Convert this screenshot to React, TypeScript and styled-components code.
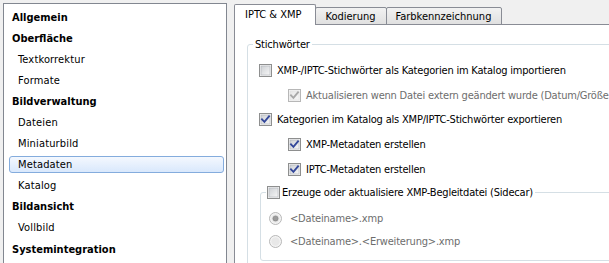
import React from 'react'
import styled, { createGlobalStyle } from 'styled-components'

const GlobalStyle = createGlobalStyle`
  html, body {
    margin: 0;
    padding: 0;
    background: #f0f0f0;
    overflow: hidden;
  }
  body {
    font-family: 'DejaVu Sans Condensed', 'Liberation Sans', Arial, sans-serif;
    font-size: 11px;
    color: #000;
  }
`

const Window = styled.div`
  display: flex;
  gap: 7px;
  width: 609px;
  height: 263px;
  padding: 3px 0 0 3px;
  box-sizing: border-box;
  overflow: hidden;
`

const NavList = styled.ul`
  flex: none;
  width: 224px;
  height: 300px;
  margin: 0;
  padding: 2.5px 0 0;
  list-style: none;
  background: #fff;
  border: 1px solid #828790;
  box-sizing: border-box;
`

const NavItem = styled.li`
  display: flex;
  height: 21.1px;
  padding: 2px 2px 2px 5px;
  box-sizing: border-box;
`

const NavLabel = styled.span<{ $sub?: boolean; $selected?: boolean }>`
  flex: 1;
  display: flex;
  align-items: center;
  padding-left: ${p => (p.$sub ? 8 : 2)}px;
  font-weight: ${p => (p.$sub ? 'normal' : 'bold')};
  letter-spacing: ${p => (p.$sub ? '0.15px' : '0')};
  border: 1px solid ${p => (p.$selected ? '#84acdd' : 'transparent')};
  border-radius: 3px;
  background: ${p => (p.$selected ? 'linear-gradient(#f4f8fe, #d9e8fc)' : 'transparent')};
`

const TabArea = styled.div`
  flex: none;
  width: 430px;
  display: flex;
  flex-direction: column;
`

const TabStrip = styled.div`
  display: flex;
  align-items: flex-end;
  height: 22px;
  padding-top: 1px;
  box-sizing: border-box;
  position: relative;
  z-index: 1;
`

const Tab = styled.div<{ $active?: boolean }>`
  display: flex;
  align-items: center;
  box-sizing: border-box;
  height: ${p => (p.$active ? 21 : 18)}px;
  padding: ${p => (p.$active ? '0 14px 2px 10px' : '1px 10px 0 9px')};
  margin-left: -1px;
  margin-bottom: -1px;
  border: 1px solid #898c95;
  border-bottom: ${p => (p.$active ? 'none' : '1px solid #898c95')};
  border-radius: 2px 2px 0 0;
  background: ${p => (p.$active ? '#fff' : 'linear-gradient(#f2f2f2, #e0e0e0)')};
  position: relative;
  z-index: ${p => (p.$active ? 2 : 1)};

  &:first-child {
    margin-left: 0;
  }
`

const Panel = styled.div`
  flex: 1;
  background: #fff;
  border: 1px solid #898c95;
  padding: 0 0 0 12px;
`

const GroupBox = styled.fieldset<{ $inner?: boolean }>`
  margin: ${p => (p.$inner ? '4px 0 0 1px' : '12.5px 0 0 0')};
  padding: 0 0 ${p => (p.$inner ? 7 : 40)}px 5px;
  border: 1px solid #d5dfe5;
  border-radius: 3px;
  min-width: 0;
`

const Legend = styled.legend<{ $check?: boolean }>`
  display: flex;
  align-items: center;
  gap: 2px;
  padding: ${p => (p.$check ? '0 2px 0 1px' : '0 2px')};
  line-height: 13px;
  height: 13px;
  letter-spacing: -0.2px;
`

const GroupBody = styled.div<{ $inner?: boolean }>`
  display: flex;
  flex-direction: column;
  padding: ${p => (p.$inner ? '8.5px 0 0 3px' : '7.5px 0 0 6px')};
`

const Row = styled.label<{ $indent?: number; $disabled?: boolean; $tall?: boolean }>`
  display: flex;
  align-items: center;
  gap: ${p => (p.$tall ? 8 : 5)}px;
  height: ${p => (p.$tall ? 23 : 24.75)}px;
  padding-left: ${p => p.$indent ?? 0}px;
  white-space: nowrap;
  letter-spacing: -0.2px;
  color: ${p => (p.$disabled ? '#6d6d6d' : '#000')};
`

const BoxSvg = styled.svg`
  flex: none;
  display: block;
`

function CheckBox({ checked, disabled }: { checked?: boolean; disabled?: boolean }) {
  const id = `cb-${checked ? 1 : 0}-${disabled ? 1 : 0}`
  return (
    <BoxSvg width="13" height="13" viewBox="0 0 13 13">
      <defs>
        <linearGradient id={id} x1="0" y1="0" x2="1" y2="1">
          <stop offset="0" stopColor={disabled ? '#e6e6e6' : '#cdd0d4'} />
          <stop offset="1" stopColor="#f7f7f7" />
        </linearGradient>
      </defs>
      <rect x="0.5" y="0.5" width="12" height="12" fill="#f4f4f4" stroke={disabled ? '#b7b7b7' : '#8e8f8f'} />
      <rect x="2" y="2" width="9" height="9" fill={`url(#${id})`} stroke={disabled ? '#e0e0e0' : '#aeb3b9'} strokeWidth="0.6" />
      {checked && (
        <path
          d="M3 6.3 L5.4 8.8 L10 3.4"
          fill="none"
          stroke={disabled ? '#a8a8a8' : '#34489a'}
          strokeWidth="1.9"
          strokeLinecap="square"
        />
      )}
    </BoxSvg>
  )
}

function Radio({ checked }: { checked?: boolean }) {
  return (
    <BoxSvg width="13" height="13" viewBox="0 0 13 13">
      <circle cx="6.5" cy="6.5" r="6" fill="#f4f4f4" stroke="#b7b7b7" />
      <circle cx="6.5" cy="6.5" r="4.2" fill="#e8e8e8" />
      {checked && <circle cx="6.5" cy="6.5" r="2.6" fill="#9b9b9b" stroke="#7f7f7f" strokeWidth="0.6" />}
    </BoxSvg>
  )
}

const navItems: { label: string; sub?: boolean; selected?: boolean }[] = [
  { label: 'Allgemein' },
  { label: 'Oberfläche' },
  { label: 'Textkorrektur', sub: true },
  { label: 'Formate', sub: true },
  { label: 'Bildverwaltung' },
  { label: 'Dateien', sub: true },
  { label: 'Miniaturbild', sub: true },
  { label: 'Metadaten', sub: true, selected: true },
  { label: 'Katalog', sub: true },
  { label: 'Bildansicht' },
  { label: 'Vollbild', sub: true },
  { label: 'Systemintegration' },
]

export default function App() {
  return (
    <>
      <GlobalStyle />
      <Window>
        <NavList>
          {navItems.map(item => (
            <NavItem key={item.label}>
              <NavLabel $sub={item.sub} $selected={item.selected}>
                {item.label}
              </NavLabel>
            </NavItem>
          ))}
        </NavList>

        <TabArea>
          <TabStrip>
            <Tab $active>IPTC &amp; XMP</Tab>
            <Tab>Kodierung</Tab>
            <Tab>Farbkennzeichnung</Tab>
          </TabStrip>
          <Panel>
            <GroupBox>
              <Legend>Stichwörter</Legend>
              <GroupBody>
                <Row>
                  <CheckBox />
                  XMP-/IPTC-Stichwörter als Kategorien im Katalog importieren
                </Row>
                <Row $indent={29} $disabled>
                  <CheckBox checked disabled />
                  Aktualisieren wenn Datei extern geändert wurde (Datum/Größe)
                </Row>
                <Row>
                  <CheckBox checked />
                  Kategorien im Katalog als XMP/IPTC-Stichwörter exportieren
                </Row>
                <Row $indent={29}>
                  <CheckBox checked />
                  XMP-Metadaten erstellen
                </Row>
                <Row $indent={29}>
                  <CheckBox checked />
                  IPTC-Metadaten erstellen
                </Row>
                <GroupBox $inner>
                  <Legend $check>
                    <CheckBox />
                    Erzeuge oder aktualisiere XMP-Begleitdatei (Sidecar)
                  </Legend>
                  <GroupBody $inner>
                    <Row $tall $disabled>
                      <Radio checked />
                      &lt;Dateiname&gt;.xmp
                    </Row>
                    <Row $tall $disabled>
                      <Radio />
                      &lt;Dateiname&gt;.&lt;Erweiterung&gt;.xmp
                    </Row>
                  </GroupBody>
                </GroupBox>
              </GroupBody>
            </GroupBox>
          </Panel>
        </TabArea>
      </Window>
    </>
  )
}
